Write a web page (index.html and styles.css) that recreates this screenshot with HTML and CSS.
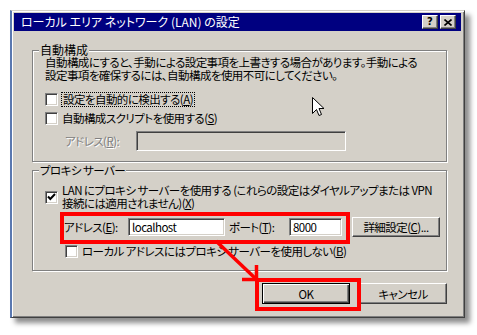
FILE: index.html
```html
<!DOCTYPE html>
<html lang="ja">
<head>
<meta charset="utf-8">
<link rel="stylesheet" href="styles.css">
</head>
<body>
<div class="page">
  <div class="dialog">
    <div class="titlebar">
      <span class="title">ローカル エリア ネットワーク (LAN) の設定</span>
      <div class="tbtns">
        <span class="tbtn help">?</span>
        <span class="tbtn close"><svg width="8" height="7" viewBox="0 0 8 7"><path d="M0.5 0.5 L7.5 6.5 M7.5 0.5 L0.5 6.5" stroke="#000" stroke-width="1.6" fill="none"/></svg></span>
      </div>
    </div>
    <div class="body">
      <fieldset class="group g1">
        <legend>自動構成</legend>
        <div class="inner">
          <p class="desc"><span class="line">自動構成にすると、手動による設定事項を上書きする場合があります。手動による</span><span class="line">設定事項を確保するには、自動構成を使用不可にしてください。</span></p>
          <div class="cbrow r1"><span class="cb"></span><span class="lbl focus">設定を自動的に検出する(<u>A</u>)</span></div>
          <div class="cbrow r2"><span class="cb"></span><span class="lbl">自動構成スクリプトを使用する(<u>S</u>)</span></div>
          <div class="addrrow"><span class="dis">アドレス(<u>R</u>):</span><span class="field disabled"></span></div>
        </div>
      </fieldset>
      <fieldset class="group g2">
        <legend>プロキシ サーバー</legend>
        <div class="inner">
          <div class="cbrow r3"><span class="cb"><svg width="11" height="11" viewBox="0 0 11 11"><path d="M2 4.5 L4.3 7 L9 2" stroke="#000" stroke-width="2" fill="none"/></svg></span><span class="lbl two"><span class="line">LAN にプロキシ サーバーを使用する (これらの設定はダイヤルアップまたは VPN</span><span class="line">接続には適用されません)(<u>X</u>)</span></span></div>
          <div class="proxyrow">
            <span class="plbl">アドレス(<u>E</u>):</span>
            <span class="field addr">localhost</span>
            <span class="plbl port-lbl">ポート(<u>T</u>):</span>
            <span class="field port">8000</span>
            <span class="btn adv">詳細設定(<u>C</u>)...</span>
          </div>
          <div class="cbrow r4"><span class="cb"></span><span class="lbl">ローカル アドレスにはプロキシ サーバーを使用しない(<u>B</u>)</span></div>
        </div>
      </fieldset>
      <div class="actions">
        <span class="btn default">OK</span>
        <span class="btn">キャンセル</span>
      </div>
    </div>
  </div>
  <div class="mark mark-addr"></div>
  <div class="mark mark-ok"></div>
  <svg class="arrow" width="477" height="335" viewBox="0 0 477 335">
    <path d="M216 241 L256 279" stroke="#ff0000" stroke-width="3.5" fill="none"/>
    <path d="M242 279.5 L256.5 279.5 L256.5 265" stroke="#ff0000" stroke-width="3.5" fill="none"/>
  </svg>
  <svg class="cursor" width="13" height="21" viewBox="0 0 13 21">
    <path d="M0.5 0.5 L0.5 16.5 L4.5 12.5 L7 18.5 L9.5 17.5 L7 11.5 L12 11.5 Z" fill="#fff" stroke="#000" stroke-width="1"/>
  </svg>
</div>
</body>
</html>
```

FILE: styles.css
```css
html, body {
  margin: 0;
  padding: 0;
  background: #ffffff;
}

.page {
  position: relative;
  width: 477px;
  height: 335px;
  overflow: hidden;
  font-family: "Noto Sans CJK JP", "Noto Sans", sans-serif;
  font-size: 11.5px;
  letter-spacing: -0.55px;
  font-feature-settings: "palt";
  color: #000;
}

.dialog {
  box-sizing: border-box;
  margin: 10px 0 0 10px;
  width: 455px;
  height: 308px;
  background: #d4d0c8;
  border: 1px solid;
  border-left-width: 2px;
  border-color: #d4d0c8 #404040 #404040 #5a78b0;
  box-shadow: inset 1px 1px 0 #ffffff, inset -1px -1px 0 #808080, 5px 5px 5px rgba(0, 0, 0, 0.45);
  padding: 2px 3px 0 2px;
}

.titlebar {
  height: 18px;
  background: #000080;
  display: flex;
  align-items: center;
  justify-content: space-between;
  padding: 0 5px 0 7px;
}

.title {
  color: #ffffff;
  font-size: 12px;
  letter-spacing: 0;
  line-height: 14px;
  white-space: nowrap;
}

.tbtns {
  display: flex;
  gap: 2px;
}

.tbtn {
  box-sizing: border-box;
  width: 16px;
  height: 14px;
  background: #d4d0c8;
  border: 1px solid;
  border-color: #ffffff #404040 #404040 #ffffff;
  box-shadow: inset -1px -1px 0 #808080;
  display: flex;
  align-items: center;
  justify-content: center;
  font-family: "DejaVu Sans", sans-serif;
  font-weight: bold;
  font-size: 10px;
  letter-spacing: 0;
  line-height: 10px;
}

.body {
  display: flex;
  flex-direction: column;
}

.group {
  box-sizing: border-box;
  width: 415px;
  margin: 0 0 0 18px;
  padding: 0 0 10px 0;
  border: 1px solid #808080;
  box-shadow: inset 1px 1px 0 #ffffff, 1px 1px 0 #ffffff;
  min-width: 0;
}

.g1 { margin-top: 13px; }
.g2 { margin-top: 2px; }

.group legend {
  margin-left: 6px;
  padding: 0 1px;
  line-height: 12px;
  background: #d4d0c8;
}

.g1 legend {
  font-size: 12px;
  letter-spacing: 0;
}

.inner {
  padding-left: 12px;
}

.desc {
  margin: 0;
  white-space: nowrap;
}

.line {
  display: block;
  height: 13px;
  line-height: 13px;
}

.cbrow {
  display: flex;
  align-items: center;
  gap: 4px;
  height: 17px;
  white-space: nowrap;
}

.r1 { margin-top: 9px; }
.r2 { margin-top: 2px; }
.r3 { margin-top: 8px; height: 26px; }
.r4 { margin-top: 6px; padding-left: 20px; }

.cb {
  box-sizing: border-box;
  width: 13px;
  height: 13px;
  flex: none;
  background: #ffffff;
  border: 1px solid;
  border-color: #808080 #ffffff #ffffff #808080;
  box-shadow: inset 1px 1px 0 #404040, inset -1px -1px 0 #d4d0c8;
  display: flex;
  align-items: center;
  justify-content: center;
}

.lbl {
  line-height: 13px;
}

.focus {
  outline: 1px dotted #000;
  outline-offset: 0;
  padding: 0 1px;
}

.addrrow {
  margin-top: 4px;
  height: 20px;
  display: flex;
  align-items: center;
}

.dis {
  width: 71px;
  margin-left: 20px;
  color: #808080;
  text-shadow: 1px 1px 0 #ffffff;
  white-space: nowrap;
}

.field {
  box-sizing: border-box;
  height: 20px;
  background: #ffffff;
  border: 1px solid;
  border-color: #808080 #ffffff #ffffff #808080;
  box-shadow: inset 1px 1px 0 #404040, inset -1px -1px 0 #d4d0c8;
  padding: 0 3px;
  line-height: 17px;
  white-space: nowrap;
}

.field.disabled {
  width: 210px;
  background: #d4d0c8;
}

.proxyrow {
  margin-top: 7px;
  height: 20px;
  display: flex;
  align-items: center;
  white-space: nowrap;
}

.plbl {
  width: 64px;
  margin-left: 19px;
  line-height: 13px;
}

.port-lbl {
  width: 60px;
  margin-left: 4px;
}

.field.addr { width: 97px; height: 18px; line-height: 16px; }
.field.port { width: 53px; height: 18px; line-height: 16px; }

.btn {
  box-sizing: border-box;
  height: 21px;
  width: 88px;
  background: #d4d0c8;
  border: 1px solid;
  border-color: #ffffff #404040 #404040 #ffffff;
  box-shadow: inset -1px -1px 0 #808080;
  display: flex;
  align-items: center;
  justify-content: center;
  white-space: nowrap;
}

.btn.adv {
  margin-left: 10px;
  height: 20px;
}

.actions {
  width: 415px;
  margin: 12px 0 0 18px;
  display: flex;
  justify-content: flex-end;
  gap: 9px;
}

.btn.default {
  border-color: #000000;
  box-shadow: inset 1px 1px 0 #ffffff, inset -1px -1px 0 #404040, inset -2px -2px 0 #808080;
}

.mark {
  position: absolute;
  box-sizing: border-box;
  border: 4px solid #ff0000;
}

.mark-addr {
  left: 60px;
  top: 212px;
  width: 290px;
  height: 32px;
}

.mark-ok {
  left: 255px;
  top: 278px;
  width: 106px;
  height: 33px;
}

.arrow {
  position: absolute;
  left: 0;
  top: 0;
}

.cursor {
  position: absolute;
  left: 312px;
  top: 97px;
}
```
